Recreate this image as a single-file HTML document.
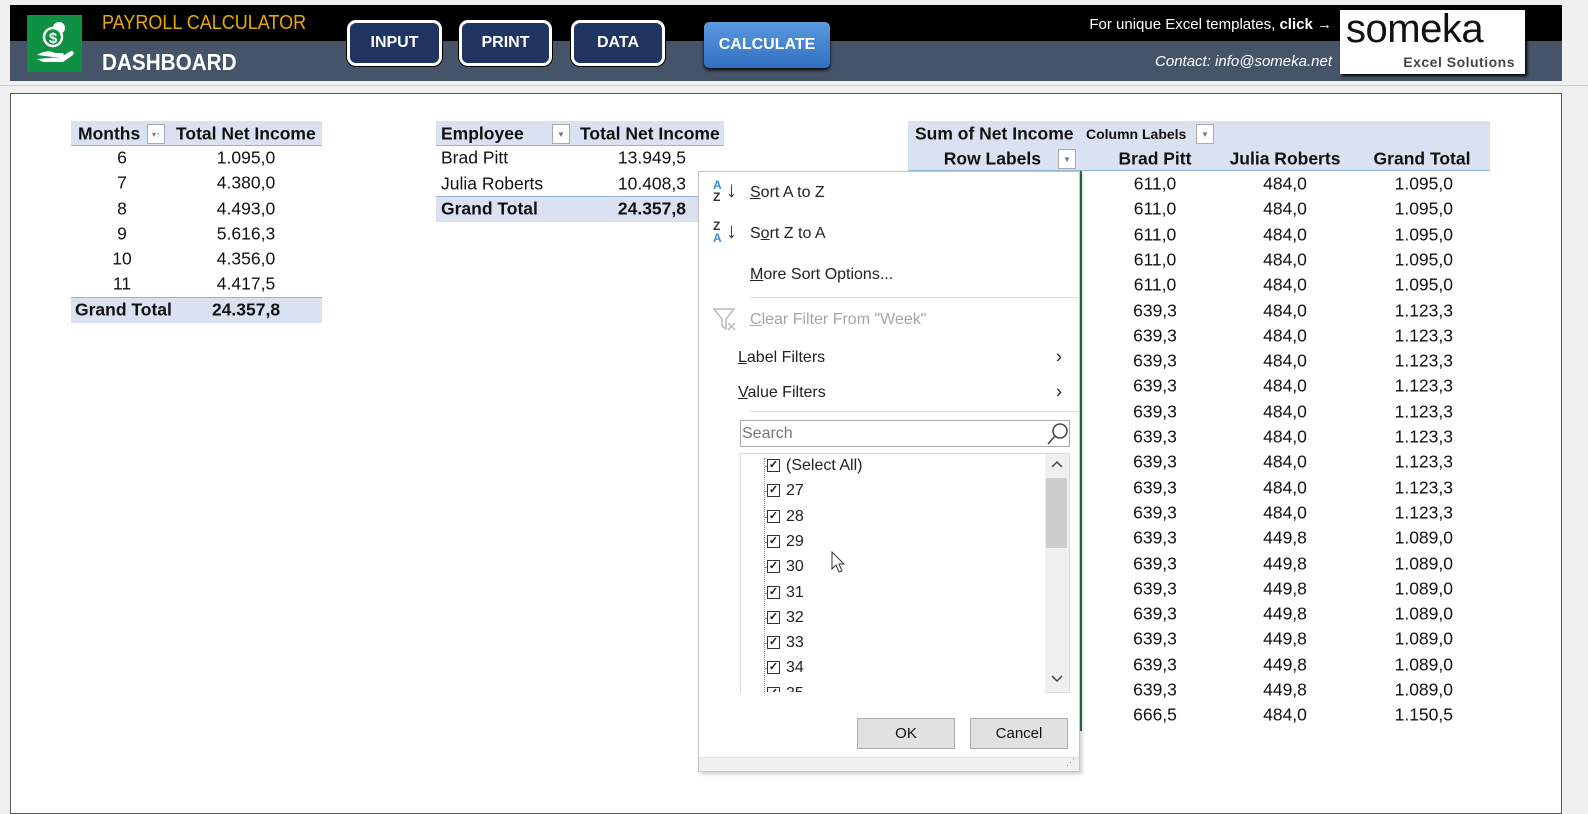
<!DOCTYPE html>
<html><head><meta charset="utf-8"><style>
*{margin:0;padding:0;box-sizing:border-box}
body{width:1588px;height:814px;background:#f0f0f0;position:relative;overflow:hidden;font-family:"Liberation Sans",sans-serif;color:#111}
.a{position:absolute;white-space:nowrap}
.btn{position:absolute;border:3px solid #fff;border-radius:9px;background:#1f3461;color:#fff;font-weight:bold;font-size:16px;display:flex;align-items:center;justify-content:center;box-shadow:0 0 0 1px #000}
.c{font-size:17.5px;transform:translate(-50%,-50%)}
.r{font-size:17.5px;transform:translate(-100%,-50%)}
.l{font-size:17.5px;transform:translateY(-50%)}
.hdr{position:absolute;background:#dae2f1}
.m{font-family:"Liberation Sans",sans-serif;font-size:16px;transform:translateY(-50%);color:#222}
.cb{position:absolute;width:13px;height:13px;border:1px solid #333;background:#fff;font-size:11px;line-height:11px;text-align:center;font-weight:bold}
.dd{position:absolute;width:18px;height:20px;border:1px solid #aaa;background:#fff;color:#777;font-size:8px;display:flex;align-items:center;justify-content:center}
</style></head><body>
<div class="a" style="left:10px;top:5px;width:1552px;height:36px;background:#000"></div>
<div class="a" style="left:10px;top:41px;width:1552px;height:40px;background:#46546a"></div>
<div class="a" style="left:0;top:85px;width:1588px;height:1px;background:#ccc"></div>
<div class="a" style="left:10px;top:93px;width:1552px;height:721px;background:#fff;border:1px solid #555"></div>
<div class="a" style="left:27px;top:15px;width:55px;height:57px;background:#0f9143">
<svg width="55" height="57" viewBox="0 0 55 57"><circle cx="32" cy="13" r="6" fill="#fff"/><circle cx="26" cy="22" r="9" fill="#0f9143" stroke="#fff" stroke-width="2.5"/><text x="26" y="28" font-size="15" font-weight="bold" fill="#fff" text-anchor="middle" font-family="Liberation Sans">$</text><path d="M10 40 Q20 34 28 38 L36 38 Q38 41 34 42 L26 42 M34 42 L44 36 Q48 36 46 40 L36 47 L16 47 L10 44 Z" fill="#fff"/></svg></div>
<div class="a" style="left:102px;top:12px;font-size:20px;color:#e8a900;transform:scaleX(.9);transform-origin:left">PAYROLL CALCULATOR</div>
<div class="a" style="left:102px;top:49px;font-size:23px;color:#fff;font-weight:bold;transform:scaleX(.9);transform-origin:left">DASHBOARD</div>
<div class="btn" style="left:347px;top:20px;width:95px;height:46px">INPUT</div>
<div class="btn" style="left:459px;top:20px;width:93px;height:46px">PRINT</div>
<div class="btn" style="left:571px;top:20px;width:94px;height:46px">DATA</div>
<div class="btn" style="left:704px;top:22px;width:126px;height:46px;border:none;border-radius:5px;background:linear-gradient(#5b9ae0,#2f6fc0);box-shadow:0 2px 3px #000">CALCULATE</div>
<div class="a" style="left:1332px;top:16px;font-size:15px;color:#fff;transform:translateX(-100%)">For unique Excel templates, <b>click →</b></div>
<div class="a" style="left:1332px;top:53px;font-size:15px;color:#fff;font-style:italic;transform:translateX(-100%)">Contact: info@someka.net</div>
<div class="a" style="left:1340px;top:10px;width:185px;height:64px;background:#fff;box-shadow:2px 2px 3px #000;overflow:hidden">
<div class="a" style="left:6px;top:-3px;font-size:40px;color:#111;letter-spacing:-0.5px">someka</div>
<div class="a" style="right:10px;top:44px;font-size:14px;color:#444;font-weight:bold;letter-spacing:.5px">Excel Solutions</div></div>

<div class="hdr" style="left:71px;top:121px;width:251px;height:25px;border-bottom:1px solid #95b3d7"></div>
<div class="a l" style="left:78px;top:134px;font-weight:bold">Months</div>
<div class="dd" style="left:147px;top:124px">▾↑</div>
<div class="a l" style="left:176px;top:134px;font-weight:bold">Total Net Income</div>
<div class="a c" style="left:122px;top:158px">6</div><div class="a c" style="left:246px;top:158px">1.095,0</div>
<div class="a c" style="left:122px;top:183px">7</div><div class="a c" style="left:246px;top:183px">4.380,0</div>
<div class="a c" style="left:122px;top:209px">8</div><div class="a c" style="left:246px;top:209px">4.493,0</div>
<div class="a c" style="left:122px;top:234px">9</div><div class="a c" style="left:246px;top:234px">5.616,3</div>
<div class="a c" style="left:122px;top:259px">10</div><div class="a c" style="left:246px;top:259px">4.356,0</div>
<div class="a c" style="left:122px;top:284px">11</div><div class="a c" style="left:246px;top:284px">4.417,5</div>
<div class="hdr" style="left:71px;top:297px;width:251px;height:26px;border-top:1px solid #95b3d7"></div>
<div class="a l" style="left:75px;top:310px;font-weight:bold">Grand Total</div>
<div class="a c" style="left:246px;top:310px;font-weight:bold">24.357,8</div>

<div class="hdr" style="left:436px;top:121px;width:288px;height:25px;border-bottom:1px solid #95b3d7"></div>
<div class="a l" style="left:441px;top:134px;font-weight:bold">Employee</div>
<div class="dd" style="left:552px;top:124px">▼</div>
<div class="a l" style="left:580px;top:134px;font-weight:bold">Total Net Income</div>
<div class="a l" style="left:441px;top:158px">Brad Pitt</div><div class="a r" style="left:686px;top:158px">13.949,5</div>
<div class="a l" style="left:441px;top:184px">Julia Roberts</div><div class="a r" style="left:686px;top:184px">10.408,3</div>
<div class="hdr" style="left:436px;top:196px;width:288px;height:26px;border-top:1px solid #95b3d7"></div>
<div class="a l" style="left:441px;top:209px;font-weight:bold">Grand Total</div>
<div class="a r" style="left:686px;top:209px;font-weight:bold">24.357,8</div>

<div class="hdr" style="left:908px;top:121px;width:582px;height:50px;border-bottom:1px solid #95b3d7"></div>
<div class="a l" style="left:915px;top:134px;font-weight:bold">Sum of Net Income</div>
<div class="a l" style="left:1086px;top:134px;font-weight:bold;font-size:14px">Column Labels</div>
<div class="dd" style="left:1196px;top:124px">▼</div>
<div class="a r" style="left:1041px;top:159px;font-weight:bold">Row Labels</div>
<div class="dd" style="left:1058px;top:149px">▼</div>
<div class="a c" style="left:1155px;top:159px;font-weight:bold">Brad Pitt</div>
<div class="a c" style="left:1285px;top:159px;font-weight:bold">Julia Roberts</div>
<div class="a c" style="left:1422px;top:159px;font-weight:bold">Grand Total</div>
<div class="a" style="left:1080px;top:171px;width:2px;height:560px;background:#217346"></div>
<div id="rows"></div>
<script>
var d=[];for(var i=0;i<5;i++)d.push(["611,0","484,0","1.095,0"]);for(i=0;i<9;i++)d.push(["639,3","484,0","1.123,3"]);for(i=0;i<7;i++)d.push(["639,3","449,8","1.089,0"]);d.push(["666,5","484,0","1.150,5"]);
var h="";d.forEach(function(r,k){var y=184+k*25.3;h+='<div class="a c" style="left:1155px;top:'+y+'px">'+r[0]+'</div><div class="a c" style="left:1285px;top:'+y+'px">'+r[1]+'</div><div class="a r" style="left:1453px;top:'+y+'px">'+r[2]+'</div>';});
document.getElementById("rows").innerHTML=h;
</script>

<div class="a" style="left:698px;top:171px;width:382px;height:601px;background:#fff;border:1px solid #c6c6c6;box-shadow:2px 2px 4px rgba(0,0,0,.2)"></div>
<div class="a" style="left:713px;top:179px;font-size:12px;line-height:12px;color:#3a8ad6;font-weight:bold">A<br><span style="color:#333">Z</span></div>
<div class="a" style="left:726px;top:177px;font-size:22px;color:#333">↓</div>
<div class="a m" style="left:750px;top:193px"><u>S</u>ort A to Z</div>
<div class="a" style="left:713px;top:220px;font-size:12px;line-height:12px;color:#333;font-weight:bold">Z<br><span style="color:#3a8ad6">A</span></div>
<div class="a" style="left:726px;top:218px;font-size:22px;color:#333">↓</div>
<div class="a m" style="left:750px;top:234px">S<u>o</u>rt Z to A</div>
<div class="a m" style="left:750px;top:275px"><u>M</u>ore Sort Options...</div>
<div class="a" style="left:750px;top:297px;width:330px;height:1px;background:#ddd"></div>
<svg class="a" style="left:713px;top:308px" width="26" height="24"><path d="M1 1 H21 L13 11 V21 L9 18 V11 Z" fill="none" stroke="#bbb" stroke-width="1.5"/><path d="M15 15 L22 22 M22 15 L15 22" stroke="#bbb" stroke-width="1.5"/></svg>
<div class="a m" style="left:750px;top:320px;color:#a6a6a6"><u>C</u>lear Filter From "Week"</div>
<div class="a m" style="left:738px;top:358px"><u>L</u>abel Filters</div>
<div class="a m" style="left:1056px;top:357px;font-size:18px">›</div>
<div class="a m" style="left:738px;top:393px"><u>V</u>alue Filters</div>
<div class="a m" style="left:1056px;top:392px;font-size:18px">›</div>
<div class="a" style="left:750px;top:411px;width:330px;height:1px;background:#ddd"></div>
<div class="a" style="left:740px;top:420px;width:330px;height:27px;border:1px solid #aaa"></div>
<div class="a m" style="left:742px;top:434px;color:#777">Search</div>
<svg class="a" style="left:1046px;top:422px" width="24" height="24"><circle cx="14" cy="9" r="7" fill="none" stroke="#444" stroke-width="1.5"/><path d="M9 14 L2 22" stroke="#444" stroke-width="1.5"/></svg>
<div class="a" style="left:740px;top:453px;width:330px;height:240px;border:1px solid #ddd"></div>
<div class="a" style="left:1045px;top:454px;width:24px;height:238px;background:#f0f0f0"></div>
<div class="a" style="left:1046px;top:478px;width:21px;height:70px;background:#cdcdcd"></div>
<svg class="a" style="left:1050px;top:459px" width="14" height="10"><path d="M2 8 L7 3 L12 8" fill="none" stroke="#444" stroke-width="1.5"/></svg>
<svg class="a" style="left:1050px;top:674px" width="14" height="10"><path d="M2 2 L7 7 L12 2" fill="none" stroke="#444" stroke-width="1.5"/></svg>
<div class="a" style="left:764px;top:458px;width:1px;height:234px;border-left:1px dotted #888"></div>
<div id="lst"></div>
<script>
var it=["(Select All)","27","28","29","30","31","32","33","34","35"],s="";
it.forEach(function(t,k){var y=466+k*25.3;if(y>700)return;s+='<div class="a" style="left:765px;top:'+y+'px;width:6px;border-top:1px dotted #888"></div><div class="cb" style="left:767px;top:'+(y-7)+'px">✓</div><div class="a m" style="left:786px;top:'+y+'px">'+t+'</div>';});
document.getElementById("lst").innerHTML=s;
</script>
<div class="a" style="left:741px;top:692px;width:303px;height:10px;background:#fff"></div>
<svg class="a" style="left:831px;top:551px" width="16" height="24"><path d="M1 1 V18 L5 14 L8 21 L11 20 L8 13 L13 13 Z" fill="#fff" stroke="#333"/></svg>
<div class="a" style="left:857px;top:718px;width:98px;height:31px;background:#e1e1e1;border:1px solid #adadad;font-size:15px;display:flex;align-items:center;justify-content:center">OK</div>
<div class="a" style="left:970px;top:718px;width:98px;height:31px;background:#e1e1e1;border:1px solid #adadad;font-size:15px;display:flex;align-items:center;justify-content:center">Cancel</div>
<div class="a" style="left:699px;top:757px;width:380px;height:14px;background:#f0f0f0;border-top:1px solid #e0e0e0"></div>
<div class="a" style="left:1066px;top:757px;font-size:9px;color:#888">⋰</div>
</body></html>
